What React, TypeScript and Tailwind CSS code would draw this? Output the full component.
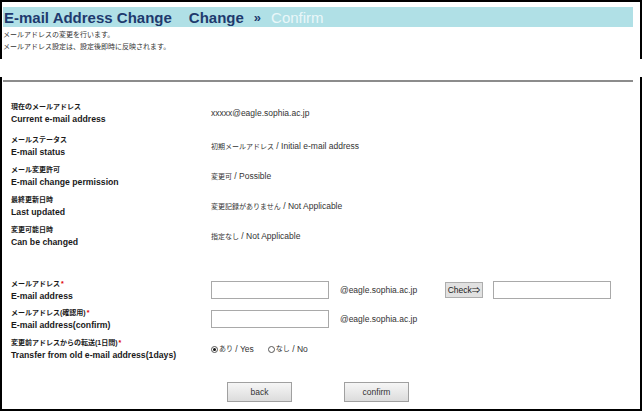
const J = ({ children }: { children: React.ReactNode }) => (
  <span className="text-[7px]">{children}</span>
);

const Req = () => <span className="text-[#e00000] ml-[1px]">*</span>;

interface InfoRow {
  jp: string;
  en: string;
  value: React.ReactNode;
}

const infoRows: InfoRow[] = [
  { jp: "現在のメールアドレス", en: "Current e-mail address", value: "xxxxx@eagle.sophia.ac.jp" },
  {
    jp: "メールステータス",
    en: "E-mail status",
    value: (
      <>
        <J>初期メールアドレス</J> / Initial e-mail address
      </>
    ),
  },
  {
    jp: "メール変更許可",
    en: "E-mail change permission",
    value: (
      <>
        <J>変更可</J> / Possible
      </>
    ),
  },
  {
    jp: "最終更新日時",
    en: "Last updated",
    value: (
      <>
        <J>変更記録がありません</J> / Not Applicable
      </>
    ),
  },
  {
    jp: "変更可能日時",
    en: "Can be changed",
    value: (
      <>
        <J>指定なし</J> / Not Applicable
      </>
    ),
  },
];

function Label({ jp, en, req }: { jp: string; en: string; req?: boolean }) {
  return (
    <div className="w-[200px] shrink-0 font-bold text-[#1a1a1a] leading-[12px]">
      <div className="h-[12px] text-[7px]">
        {jp}
        {req && <Req />}
      </div>
      <div className="h-[12px] text-[8.7px]">{en}</div>
    </div>
  );
}

function TextBox({ className = "" }: { className?: string }) {
  return <div className={`w-[118px] h-[18px] border border-[#a9a9a9] bg-white ${className}`} />;
}

function Radio({ checked, children }: { checked?: boolean; children: React.ReactNode }) {
  return (
    <span className="flex items-center">
      <span className="w-[7px] h-[7px] rounded-full border border-[#555] bg-white flex items-center justify-center mr-[1px]">
        {checked && <span className="w-[3px] h-[3px] rounded-full bg-[#111]" />}
      </span>
      {children}
    </span>
  );
}

function Btn({ children }: { children: React.ReactNode }) {
  return (
    <div className="w-[65px] h-[20px] border border-[#a0a0a0] bg-gradient-to-b from-[#f6f6f6] to-[#dcdcdc] flex items-center justify-center text-[8.5px] text-[#333]">
      {children}
    </div>
  );
}

export default function App() {
  return (
    <div className="w-[642px] h-[411px] bg-white font-['Liberation_Sans','Noto_Sans_CJK_JP',sans-serif] flex flex-col">
      {/* header frame */}
      <div className="h-[59px] border-t-2 border-x-2 border-black pt-[5px] pl-[1px]">
        <div className="w-[630px] h-[20px] bg-[#b0e0e6] flex items-center pl-[1px] leading-none">
          <span className="text-[15px] font-bold text-[#1e3a6e]">E-mail Address Change</span>
          <span className="text-[15px] font-bold text-[#1e3a6e] ml-[17px]">Change</span>
          <span className="text-[13px] font-bold text-[#1e3a6e] ml-[10px]">»</span>
          <span className="text-[15px] text-[#eaf7f9] ml-[10px]">Confirm</span>
        </div>
        <div className="text-[7px] leading-[12px] text-[#333] mt-[2px]">
          <div>メールアドレスの変更を行います。</div>
          <div>メールアドレス設定は、設定後即時に反映されます。</div>
        </div>
      </div>

      {/* body frame */}
      <div className="mt-[18px] flex-1 border-b-2 border-x-2 border-black pt-[3px]">
        <div className="ml-[1px] w-[630px] h-[2px] bg-[#8c8c8c]" />

        <div className="pl-[9px] mt-[19px] flex flex-col">
          {infoRows.map((row, i) => (
            <div key={row.en} className={`flex items-center ${i === 0 ? "" : i === 1 ? "mt-[9px]" : "mt-[6px]"}`}>
              <Label jp={row.jp} en={row.en} />
              <div className="text-[8.5px] text-[#333]">{row.value}</div>
            </div>
          ))}

          <div className="flex items-center mt-[30px]">
            <Label jp="メールアドレス" en="E-mail address" req />
            <TextBox />
            <span className="ml-[11px] w-[105px] text-[8.5px] text-[#333]">@eagle.sophia.ac.jp</span>
            <div className="w-[38px] h-[16px] border border-[#adadad] bg-[#e1e1e1] flex items-center justify-center text-[8.5px] text-[#222]">
              Check⇒
            </div>
            <TextBox className="ml-[10px] w-[117px]" />
          </div>

          <div className="flex items-center mt-[5px]">
            <Label jp="メールアドレス(確認用)" en="E-mail address(confirm)" req />
            <TextBox />
            <span className="ml-[11px] text-[8.5px] text-[#333]">@eagle.sophia.ac.jp</span>
          </div>

          <div className="flex items-center mt-[6px]">
            <Label jp="変更前アドレスからの転送(1日間)" en="Transfer from old e-mail address(1days)" req />
            <div className="flex items-center gap-[14px] text-[8.5px] text-[#333]">
              <Radio checked>
                <J>あり</J>&nbsp;/ Yes
              </Radio>
              <Radio>
                <J>なし</J>&nbsp;/ No
              </Radio>
            </div>
          </div>

          <div className="flex gap-[52px] pl-[216px] mt-[21px]">
            <Btn>back</Btn>
            <Btn>confirm</Btn>
          </div>
        </div>
      </div>
    </div>
  );
}
